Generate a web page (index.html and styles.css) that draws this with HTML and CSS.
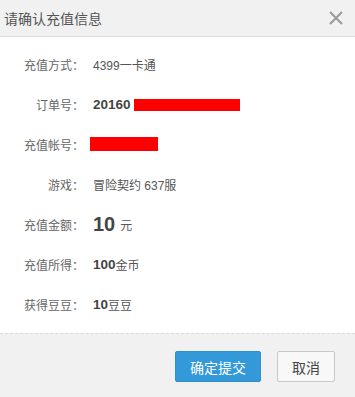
FILE: index.html
```html
<!DOCTYPE html>
<html lang="zh-CN">
<head>
    <meta charset="UTF-8">
    <meta name="viewport" content="width=device-width, initial-scale=1.0">
    <title>请确认充值信息</title>
    <link rel="stylesheet" href="styles.css">
</head>
<body>
    <div class="dialog">
        <div class="dialog-header">
            <h2>请确认充值信息</h2>
            <span class="close-button">
                <svg width="14" height="14" viewBox="0 0 14 14"><path d="M1 1L13 13M13 1L1 13" stroke="#9a9a9a" stroke-width="2"/></svg>
            </span>
        </div>
        <div class="dialog-body">
            <div class="row">
                <span class="label">充值方式：</span>
                <span class="value">4399一卡通</span>
            </div>
            <div class="row">
                <span class="label">订单号：</span>
                <span class="value"><b class="num">20160</b><i class="mask mask-order"></i></span>
            </div>
            <div class="row">
                <span class="label">充值帐号：</span>
                <span class="value"><i class="mask mask-account"></i></span>
            </div>
            <div class="row">
                <span class="label">游戏：</span>
                <span class="value">冒险契约 637服</span>
            </div>
            <div class="row">
                <span class="label">充值金额：</span>
                <span class="value"><b class="amount">10</b> 元</span>
            </div>
            <div class="row">
                <span class="label">充值所得：</span>
                <span class="value"><b class="num">100</b>金币</span>
            </div>
            <div class="row">
                <span class="label">获得豆豆：</span>
                <span class="value"><b class="num">10</b>豆豆</span>
            </div>
        </div>
        <div class="dialog-footer">
            <button class="btn btn-primary">确定提交</button>
            <button class="btn btn-default">取消</button>
        </div>
    </div>
</body>
</html>
```

FILE: styles.css
```css
* {
    box-sizing: border-box;
    margin: 0;
    padding: 0;
}

body {
    font-family: "Liberation Sans", "Noto Sans CJK SC", sans-serif;
    background: #fff;
    color: #555;
    width: 355px;
    height: 397px;
    overflow: hidden;
}

.dialog {
    display: flex;
    flex-direction: column;
    height: 397px;
}

.dialog-header {
    height: 37px;
    background: #f1f1f1;
    border-bottom: 1px solid #dcdcdc;
    display: flex;
    align-items: center;
    justify-content: space-between;
    padding: 0 12px 0 4px;
}

.dialog-header h2 {
    font-size: 14px;
    font-weight: normal;
    color: #555;
}

.close-button {
    display: flex;
}

.dialog-body {
    flex: 1;
    padding: 7px 0 9px;
}

.row {
    height: 40px;
    display: flex;
    align-items: center;
    font-size: 12px;
}

.label {
    width: 84px;
    text-align: right;
    color: #666;
}

.value {
    margin-left: 9px;
    display: flex;
    align-items: center;
    color: #555;
}

.num {
    font-size: 13.5px;
    color: #444;
}

.amount {
    font-size: 20px;
    color: #444;
    margin-right: 5px;
}

.mask {
    display: inline-block;
    background: #ff0000;
}

.mask-order {
    width: 106px;
    height: 12px;
    margin-left: 3px;
    margin-top: 2px;
}

.mask-account {
    width: 68px;
    height: 14px;
    margin-left: -3px;
}

.dialog-footer {
    height: 64px;
    background: #f1f1f1;
    border-top: 1px dashed #dadada;
    display: flex;
    justify-content: flex-end;
    align-items: flex-start;
    gap: 16px;
    padding: 17px 20px 0 0;
}

.btn {
    height: 31px;
    font-family: "Liberation Sans", "Noto Sans CJK SC", sans-serif;
    font-size: 14px;
    border-radius: 2px;
    cursor: pointer;
}

.btn-primary {
    width: 86px;
    background: #3399d9;
    border: 1px solid #2e8fcf;
    color: #fff;
}

.btn-default {
    width: 58px;
    background: #f8f8f8;
    border: 1px solid #c8c8c8;
    color: #444;
}
```
